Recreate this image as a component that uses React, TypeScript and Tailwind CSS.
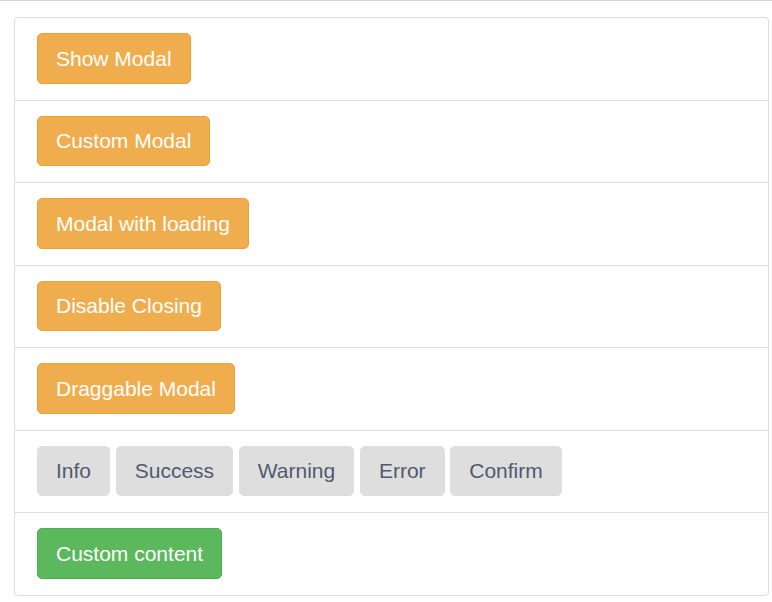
const orange =
  "h-[50.5px] px-[18px] rounded-[5px] border border-[#eea236] bg-[#f0ad4e] text-white text-[21px]";
const gray =
  "h-[50.5px] px-[18px] rounded-[5px] border border-[#dedede] bg-[#dedede] text-[#515a6e] text-[21px]";

const rows = ["Show Modal", "Custom Modal", "Modal with loading", "Disable Closing", "Draggable Modal"];

function Row({ children, first }: { children: React.ReactNode; first?: boolean }) {
  return (
    <div
      className={`flex items-center gap-[5.7px] px-[22px] pt-[15px] pb-[16px] ${
        first ? "" : "border-t border-[#dddddd]"
      }`}
    >
      {children}
    </div>
  );
}

export default function App() {
  return (
    <div
      className="min-h-[602px] bg-white border-t border-[#d6d6d6] pl-[14px] pr-[3px] pt-[16px]"
      style={{ fontFamily: '"Liberation Sans", Arial, sans-serif' }}
    >
      <div className="border border-[#dddddd] rounded-[4px] bg-white">
        {rows.map((r, i) => (
          <Row key={r} first={i === 0}>
            <button className={orange}>{r}</button>
          </Row>
        ))}

        {/* message boxes */}
        <Row>
          {["Info", "Success", "Warning", "Error", "Confirm"].map((t) => (
            <button key={t} className={gray}>
              {t}
            </button>
          ))}
        </Row>

        <Row>
          <button className="h-[50.5px] px-[18px] rounded-[5px] border border-[#4cae4c] bg-[#5cb85c] text-white text-[21px]">
            Custom content
          </button>
        </Row>
      </div>
    </div>
  );
}
